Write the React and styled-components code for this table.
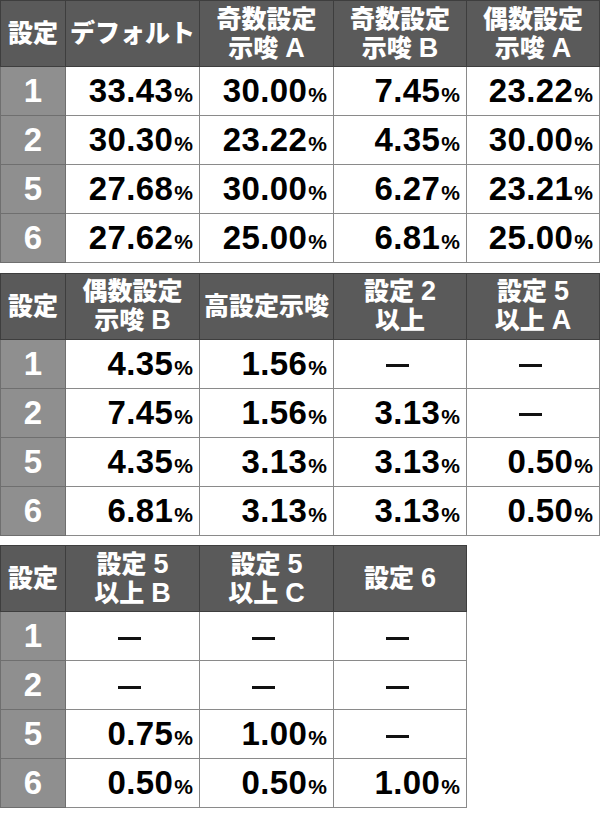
import React from 'react';
import styled, { createGlobalStyle } from 'styled-components';

const GlobalStyle = createGlobalStyle`
  html, body {
    margin: 0;
    padding: 0;
    background: #ffffff;
  }
`;

const Page = styled.div`
  display: flex;
  flex-direction: column;
  gap: 9.5px;
  width: 600px;
`;

const Table = styled.table`
  border-collapse: collapse;
  table-layout: fixed;
  width: ${p => p.width}px;
  font-family: "Liberation Sans", "Noto Sans CJK JP", sans-serif;
`;

const HeadCell = styled.th`
  height: 65px;
  padding: 0 2px;
  background: #5a5a5a;
  border: 1px solid #3e3e3e;
  color: #ffffff;
  font-family: "Liberation Sans", "Noto Sans CJK JP", sans-serif;
  font-size: 25px;
  line-height: 29px;
  font-weight: 900;
  text-align: center;
  vertical-align: middle;
  white-space: nowrap;
`;

const Latin = styled.span`
  font-size: 27px;
  font-weight: 700;
`;

const LabelCell = styled.td`
  height: 48px;
  padding: 0;
  background: #8f8f8f;
  border: 1px solid #6f6f6f;
  color: #ffffff;
  font-family: "Liberation Sans", sans-serif;
  font-size: 33px;
  font-weight: 700;
  text-align: center;
  vertical-align: middle;
`;

const ValueCell = styled.td`
  height: 48px;
  padding: 0 6px 0 0;
  background: #ffffff;
  border: 1px solid #8a8a8a;
  color: #000000;
  font-family: "Liberation Sans", sans-serif;
  font-size: 33px;
  letter-spacing: 0.4px;
  font-weight: 700;
  text-align: ${p => (p.$dash ? 'center' : 'right')};
  vertical-align: middle;
  white-space: nowrap;
`;

const Pct = styled.span`
  font-size: 21px;
  letter-spacing: 0;
  margin-left: 1px;
`;

const Dash = styled.span`
  display: inline-block;
  width: 23px;
  height: 3px;
  background: #111111;
  vertical-align: middle;
`;

const tables = [
  {
    width: 599,
    cols: [65, 134, 134, 133, 133],
    heads: [['設定'], ['デフォルト'], ['奇数設定', '示唆 |A'], ['奇数設定', '示唆 |B'], ['偶数設定', '示唆 |A']],
    rows: [
      ['1', '33.43', '30.00', '7.45', '23.22'],
      ['2', '30.30', '23.22', '4.35', '30.00'],
      ['5', '27.68', '30.00', '6.27', '23.21'],
      ['6', '27.62', '25.00', '6.81', '25.00'],
    ],
  },
  {
    width: 599,
    cols: [65, 134, 134, 133, 133],
    heads: [['設定'], ['偶数設定', '示唆 |B'], ['高設定示唆'], ['設定 |2', '以上'], ['設定 |5', '以上 |A']],
    rows: [
      ['1', '4.35', '1.56', '-', '-'],
      ['2', '7.45', '1.56', '3.13', '-'],
      ['5', '4.35', '3.13', '3.13', '0.50'],
      ['6', '6.81', '3.13', '3.13', '0.50'],
    ],
  },
  {
    width: 466,
    cols: [65, 134, 134, 133],
    heads: [['設定'], ['設定 |5', '以上 |B'], ['設定 |5', '以上 |C'], ['設定 |6']],
    rows: [
      ['1', '-', '-', '-'],
      ['2', '-', '-', '-'],
      ['5', '0.75', '1.00', '-'],
      ['6', '0.50', '0.50', '1.00'],
    ],
  },
];

// "|" splits a header line into its Japanese part and a Latin tail
function HeadLine({ text }) {
  const [jp, lat] = text.split('|');
  return (
    <div>
      {jp}
      {lat && <Latin>{lat}</Latin>}
    </div>
  );
}

function RateTable({ width, cols, heads, rows }) {
  return (
    <Table width={width}>
      <colgroup>
        {cols.map((w, i) => (
          <col key={i} style={{ width: w }} />
        ))}
      </colgroup>
      <thead>
        <tr>
          {heads.map((lines, i) => (
            <HeadCell key={i}>
              {lines.map((l, j) => (
                <HeadLine key={j} text={l} />
              ))}
            </HeadCell>
          ))}
        </tr>
      </thead>
      <tbody>
        {rows.map(([label, ...vals]) => (
          <tr key={label}>
            <LabelCell>{label}</LabelCell>
            {vals.map((v, i) =>
              v === '-' ? (
                <ValueCell key={i} $dash>
                  <Dash />
                </ValueCell>
              ) : (
                <ValueCell key={i}>
                  {v}
                  <Pct>%</Pct>
                </ValueCell>
              )
            )}
          </tr>
        ))}
      </tbody>
    </Table>
  );
}

export default function App() {
  return (
    <>
      <GlobalStyle />
      <Page>
        {tables.map((t, i) => (
          <RateTable key={i} {...t} />
        ))}
      </Page>
    </>
  );
}
